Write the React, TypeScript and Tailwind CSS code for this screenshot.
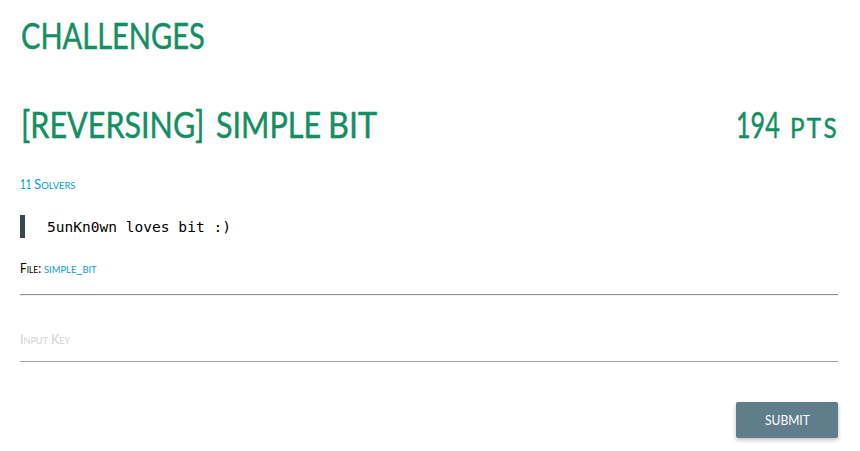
import type { ReactNode } from "react";

function Word({ slot = "", stretch, children }: { slot?: string; stretch: string; children: ReactNode }) {
  return (
    <span className={`block shrink-0 whitespace-nowrap ${slot}`}>
      <span className={`inline-block origin-left ${stretch}`}>{children}</span>
    </span>
  );
}

export default function App() {
  return (
    <main className="h-[451px] w-[860px] overflow-hidden bg-white pl-5 pr-[22px] font-['Lato',sans-serif] text-black">
      <h1 className="h-[72px] pl-px pt-[13px] text-[37px] leading-[44px] text-[#148f62] [-webkit-text-stroke:0.5px_#148f62]">
        <Word stretch="scale-x-[0.785]">CHALLENGES</Word>
      </h1>
      <div className="mt-[30px] flex h-[44px] justify-between text-[37px] leading-[44px] text-[#148f62] [-webkit-text-stroke:0.5px_#148f62]">
        <h2 className="flex w-[358px] pl-px">
          <Word slot="w-[195px]" stretch="scale-x-[0.825]">[REVERSING]</Word>
          <Word slot="w-[112px]" stretch="scale-x-[0.825]">SIMPLE</Word>
          <Word slot="w-[50px]" stretch="scale-x-[0.875]">BIT</Word>
        </h2>
        <div className="flex w-[102px] [font-variant-caps:small-caps]">
          <Word slot="w-[54px]" stretch="scale-x-[0.68]">194</Word>
          <Word slot="w-[48px]" stretch="scale-x-[0.93] tracking-[2.5px]">pts</Word>
        </div>
      </div>
      <a className="mt-7 flex h-5 text-[14px] leading-5 text-[#039be5] [font-variant-caps:small-caps]">
        <Word slot="w-[13.5px]" stretch="scale-x-[0.7]">11</Word>
        <Word stretch="scale-x-[0.94]">Solvers</Word>
      </a>
      <blockquote className="mt-[21px] h-[23px] border-l-[5px] border-[#37474f] pl-[22px] font-['DejaVu_Sans_Mono',monospace] text-[14.55px] leading-[23px]">
        5unKn0wn loves bit :)
      </blockquote>
      <p className="mt-5 flex h-5 text-[14px] leading-5 [font-variant-caps:small-caps]">
        <Word slot="w-6" stretch="scale-x-[0.84]">File:</Word>
        <a className="text-[#039be5]">
          <Word stretch="scale-x-[0.94]">simple_bit</Word>
        </a>
      </p>
      <hr className="mt-4 h-[2px] border-0 border-t border-[#929292] bg-[#eeeeee]" />
      <div className="mt-[33px] h-[33px] border-b border-[#9e9e9e] text-[14px] leading-5 text-[#d1d1d1] [font-variant-caps:small-caps]">
        <Word stretch="scale-x-[0.9]">Input Key</Word>
      </div>
      <div className="mt-10 flex justify-end">
        <button className="h-9 w-[102px] rounded-[2px] bg-[#607d8b] pl-[29px] text-left text-[14px] leading-9 text-white shadow-[0_2px_4px_rgba(0,0,0,0.25)]">
          <Word stretch="scale-x-[0.86]">SUBMIT</Word>
        </button>
      </div>
    </main>
  );
}
